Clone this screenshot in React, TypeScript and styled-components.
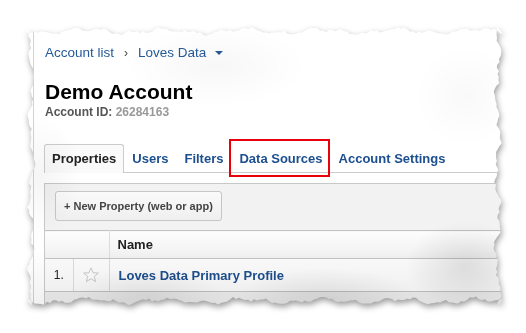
import React from 'react';
import styled, { createGlobalStyle } from 'styled-components';

const GlobalStyle = createGlobalStyle`
  html, body {
    margin: 0;
    padding: 0;
    background: #fff;
    font-family: "Liberation Sans", Arial, Helvetica, sans-serif;
  }
`;

const PAPER_W = 477;
const PAPER_H = 280;

// torn paper outline, computed once
let seed = 11;
const rnd = () => {
  seed = (seed * 16807) % 2147483647;
  return seed / 2147483647;
};
const jag = (i: number) => 4 + 2 * Math.sin(i * 0.08) + 1.6 * Math.sin(i * 0.21 + 1.3) + rnd() * 2.4;

const tornPolygon = (() => {
  const pts: string[] = [];
  for (let x = 0; x <= PAPER_W; x += 3) pts.push(`${x}px ${jag(x).toFixed(1)}px`);
  for (let y = 0; y <= PAPER_H; y += 3) pts.push(`${(PAPER_W - jag(y + 500)).toFixed(1)}px ${y}px`);
  for (let x = PAPER_W; x >= 0; x -= 3) pts.push(`${x}px ${(PAPER_H - jag(x + 900)).toFixed(1)}px`);
  for (let y = PAPER_H; y >= 0; y -= 3) pts.push(`${jag(y + 1300).toFixed(1)}px ${y}px`);
  return `polygon(${pts.join(', ')})`;
})();

const Stage = styled.div`
  width: 526px;
  height: 333px;
  padding: 26px 0 0 26px;
  box-sizing: border-box;
  overflow: hidden;
`;

const Shadow = styled.div`
  width: ${PAPER_W}px;
  height: ${PAPER_H}px;
  filter: drop-shadow(1px 3px 3px rgba(0, 0, 0, 0.4));
`;

const Paper = styled.div<{ $clip: string }>`
  position: relative;
  width: 100%;
  height: 100%;
  background: #fff;
  overflow: hidden;
  clip-path: ${p => p.$clip};
`;

const Mottle = styled.div`
  position: absolute;
  inset: 0;
  pointer-events: none;
  mix-blend-mode: multiply;
  background:
    radial-gradient(ellipse 60px 45px at 440px 240px, rgba(0, 0, 0, 0.1), transparent),
    radial-gradient(ellipse 90px 30px at 300px 272px, rgba(0, 0, 0, 0.08), transparent),
    radial-gradient(ellipse 80px 30px at 120px 272px, rgba(0, 0, 0, 0.07), transparent),
    radial-gradient(ellipse 50px 50px at 440px 70px, rgba(0, 0, 0, 0.025), transparent),
    radial-gradient(ellipse 90px 40px at 190px 40px, rgba(0, 0, 0, 0.03), transparent),
    radial-gradient(ellipse 40px 60px at 15px 150px, rgba(0, 0, 0, 0.04), transparent),
    linear-gradient(to bottom, transparent 80%, rgba(0, 0, 0, 0.06) 100%);
`;

const Page = styled.div`
  margin-left: 7px;
  height: 100%;
  border-left: 1px solid #d2d2d2;
  padding: 19px 0 0 10px;
  box-sizing: border-box;
`;

const Breadcrumb = styled.div`
  display: flex;
  align-items: center;
  gap: 10px;
  height: 16px;
  font-size: 13.5px;
  line-height: 16px;
  color: #255a99;
  padding-left: 1px;
`;

const Chevron = styled.span`
  color: #444;
  font-size: 12px;
`;

const Caret = styled.span`
  width: 0;
  height: 0;
  margin-left: -1px;
  border-left: 4px solid transparent;
  border-right: 4px solid transparent;
  border-top: 4px solid #255a99;
`;

const Title = styled.h1`
  margin: 19px 0 0;
  padding-left: 1px;
  font-size: 21px;
  line-height: 24px;
  font-weight: bold;
  color: #000;
`;

const AccountId = styled.div`
  margin-top: 1px;
  padding-left: 1px;
  font-size: 12px;
  line-height: 14px;
  font-weight: bold;
  color: #555;

  span {
    color: #999;
  }
`;

const TabBar = styled.div`
  display: flex;
  margin-top: 25px;
  border-bottom: 1px solid #ccc;
`;

const Tab = styled.div<{ $active?: boolean; $marked?: boolean }>`
  position: relative;
  height: 29px;
  margin-bottom: -1px;
  padding: 0 7px;
  box-sizing: border-box;
  font-size: 13px;
  line-height: 27px;
  font-weight: bold;
  white-space: nowrap;
  color: ${p => (p.$active ? '#222' : '#1c4f8f')};
  background: ${p => (p.$active ? '#fafafa' : 'transparent')};
  border: 1px solid ${p => (p.$active ? '#ccc' : 'transparent')};
  border-bottom: none;
  border-radius: 3px 3px 0 0;

  ${p =>
    p.$marked &&
    `
    &::after {
      content: '';
      position: absolute;
      top: -6px;
      bottom: -4px;
      left: -3px;
      right: 0;
      border: 2px solid #e8000b;
    }
  `}
`;

const Panel = styled.div`
  margin-top: 10px;
  height: 200px;
  background: #f2f2f2;
  border-top: 1px solid #c8c8c8;
  border-left: 1px solid #c8c8c8;
  padding-top: 7px;
`;

const NewButton = styled.button`
  margin-left: 10px;
  height: 30px;
  padding: 0 8px;
  border: 1px solid #c6c6c6;
  border-radius: 3px;
  background: linear-gradient(#fafafa, #efefef);
  font-family: inherit;
  font-size: 11px;
  font-weight: bold;
  color: #444;
`;

const Table = styled.table`
  width: 100%;
  margin-top: 9px;
  table-layout: fixed;
  border-collapse: collapse;
  border-top: 1px solid #c2c2c2;
`;

const HeadCell = styled.th<{ $divider?: boolean }>`
  height: 27px;
  padding: 0 0 0 8px;
  text-align: left;
  font-size: 13px;
  font-weight: bold;
  color: #222;
  background: linear-gradient(#fdfdfd, #f0f0f0);
  border-bottom: 1px solid #c2c2c2;
  border-right: ${p => (p.$divider ? '1px solid #dcdcdc' : 'none')};
`;

const Cell = styled.td<{ $center?: boolean; $divider?: boolean }>`
  height: 32px;
  padding: 0 0 0 ${p => (p.$center ? 0 : 9)}px;
  font-size: 12px;
  color: #222;
  background: #fbfbfb;
  border-bottom: 1px solid #c2c2c2;
  border-right: ${p => (p.$divider ? '1px solid #dcdcdc' : 'none')};
  text-align: ${p => (p.$center ? 'center' : 'left')};
  white-space: nowrap;
`;

const Link = styled.a`
  font-size: 13px;
  font-weight: bold;
  color: #1c4f8f;
  text-decoration: none;
`;

const EmptyCell = styled.td`
  height: 14px;
  background: #eee;
`;

const Star = () => (
  <svg width="18" height="18" viewBox="0 0 24 24" style={{ display: 'block', margin: '0 auto' }}>
    <polygon
      points="12,2.5 14.8,9 21.8,9.4 16.4,13.9 18.1,20.8 12,17 5.9,20.8 7.6,13.9 2.2,9.4 9.2,9"
      fill="none"
      stroke="#c4c4c4"
      strokeWidth="1.2"
      strokeLinejoin="round"
    />
  </svg>
);

export default function App() {
  return (
    <>
      <GlobalStyle />
      <Stage>
        <Shadow>
          <Paper $clip={tornPolygon}>
            <Page>
              <Breadcrumb>
                <span>Account list</span>
                <Chevron>›</Chevron>
                <span>Loves Data</span>
                <Caret />
              </Breadcrumb>
              <Title>Demo Account</Title>
              <AccountId>
                Account ID: <span>26284163</span>
              </AccountId>
              <TabBar>
                <Tab $active>Properties</Tab>
                <Tab>Users</Tab>
                <Tab>Filters</Tab>
                <Tab $marked>Data Sources</Tab>
                <Tab>Account Settings</Tab>
              </TabBar>
              <Panel>
                <NewButton>+ New Property (web or app)</NewButton>
                <Table>
                  <colgroup>
                    <col style={{ width: 28 }} />
                    <col style={{ width: 36 }} />
                    <col />
                  </colgroup>
                  <thead>
                    <tr>
                      <HeadCell $divider colSpan={2} />
                      <HeadCell>Name</HeadCell>
                    </tr>
                  </thead>
                  <tbody>
                    <tr>
                      <Cell $center $divider>
                        1.
                      </Cell>
                      <Cell $center $divider>
                        <Star />
                      </Cell>
                      <Cell>
                        <Link>Loves Data Primary Profile</Link>
                      </Cell>
                    </tr>
                    <tr>
                      <EmptyCell colSpan={3} />
                    </tr>
                  </tbody>
                </Table>
              </Panel>
            </Page>
            <Mottle />
          </Paper>
        </Shadow>
      </Stage>
    </>
  );
}
